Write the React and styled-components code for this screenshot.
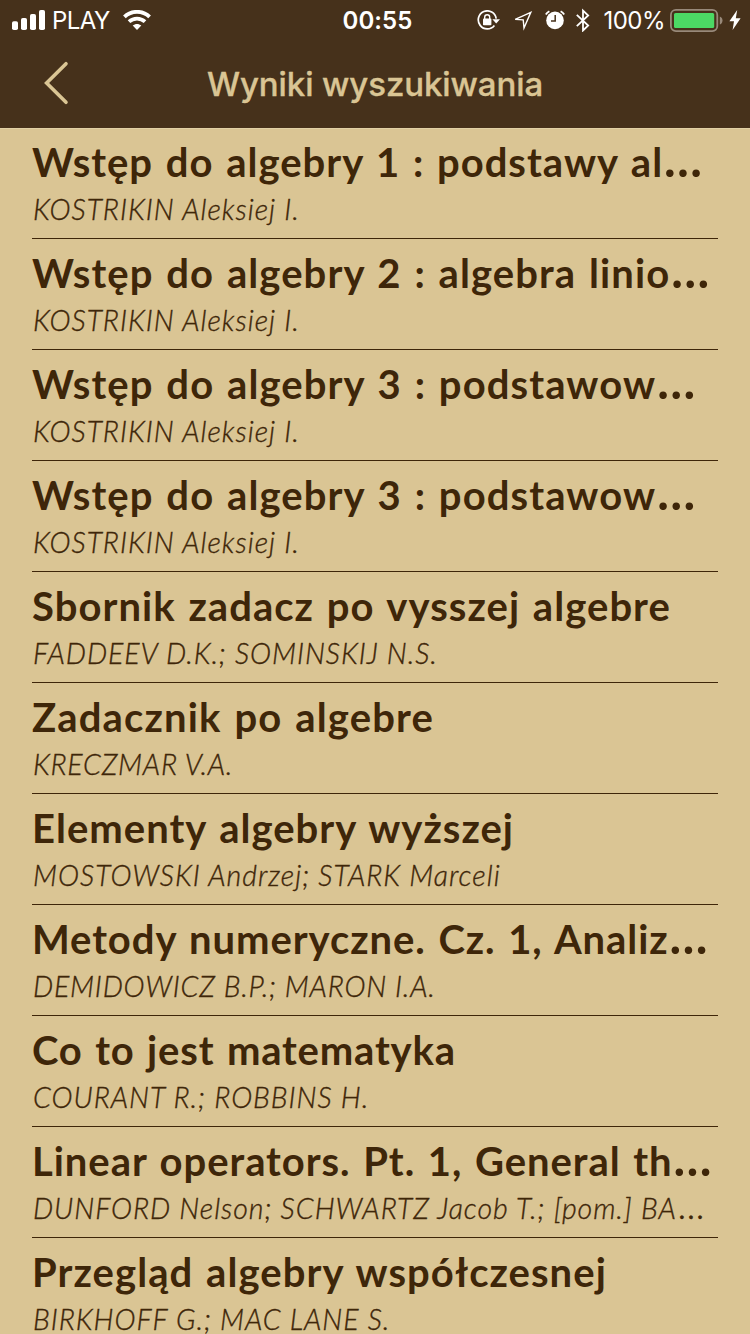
import React from 'react';
import styled, { createGlobalStyle } from 'styled-components';

const sand = '#dac594';
const bark = '#46311b';
const ink = '#3e2609';

const GlobalStyle = createGlobalStyle`
  * { box-sizing: border-box; }
  body { margin: 0; background: ${sand}; }
`;

const Screen = styled.div`
  width: 750px;
  height: 1334px;
  overflow: hidden;
  background: ${sand};
`;

const Header = styled.header`
  height: 128px;
  background: ${bark};
  box-shadow: 0 1px 0 #e2d1a6;
`;

const StatusBar = styled.div`
  display: grid;
  grid-template-columns: 1fr auto 1fr;
  align-items: center;
  height: 40px;
  padding: 0 9px 0 12px;
  color: #fff;
  font: 400 24px/38px Inter, "Liberation Sans", sans-serif;
`;

const StatusGroup = styled.div`
  display: flex;
  align-items: center;
  justify-content: ${(p) => (p.$end ? 'flex-end' : 'flex-start')};
  height: 40px;

  svg { display: block; flex: none; }
`;

const StatusText = styled.span`
  padding-top: 2px;
`;

const Carrier = styled(StatusText)`
  margin: 0 13px 0 7px;
  letter-spacing: -0.6px;
`;

const Clock = styled(StatusText)`
  padding-left: 2px;
  font-weight: 600;
  letter-spacing: 0.1px;
`;

const Percent = styled(StatusText)`
  margin: 0 5px 0 13px;
  letter-spacing: -0.5px;
`;

const Icon = styled.svg`
  margin-left: ${(p) => p.$gap || 0}px;
`;

const NavBar = styled.nav`
  display: grid;
  grid-template-columns: 100px 1fr 100px;
  align-items: center;
  height: 88px;
  color: ${sand};
`;

const BackButton = styled.button`
  display: flex;
  padding: 0 0 2px 42px;
  border: 0;
  background: none;
  color: inherit;
`;

const NavTitle = styled.h1`
  margin: 0;
  text-align: center;
  font: 500 33px/40px Inter, "Liberation Sans", sans-serif;
  letter-spacing: -0.1px;
  -webkit-text-stroke: 0.35px ${sand};
`;

const Results = styled.ul`
  margin: 0;
  padding: 0 32px;
  list-style: none;
`;

const Result = styled.li`
  height: 111px;
  padding-top: 10px;
  border-bottom: 1px solid ${ink};
  color: ${ink};
  white-space: nowrap;
`;

const Title = styled.h2`
  margin: 0;
  font: 700 40px/48px Lato, "Noto Sans", sans-serif;
  letter-spacing: ${(p) => p.$tracking}px;
  word-spacing: 2px;
`;

const Author = styled.p`
  margin: 5px 0 0 1px;
  font: italic 300 28.5px/36px Lato, "Noto Sans", sans-serif;
  letter-spacing: ${(p) => p.$tracking}px;
  -webkit-text-stroke: 0.35px ${ink};
`;

const Ellipsis = styled.span`
  margin-left: ${(p) => p.$gap}px;
  font-size: ${(p) => p.$scale}em;
  line-height: 0;
`;

const books = [
  { title: 'Wstęp do algebry 1 : podstawy al', cut: true, tt: 1, author: 'KOSTRIKIN Aleksiej I.', at: 1 },
  { title: 'Wstęp do algebry 2 : algebra linio', cut: true, tt: 1.08, author: 'KOSTRIKIN Aleksiej I.', at: 1 },
  { title: 'Wstęp do algebry 3 : podstawow', cut: true, tt: 1.09, author: 'KOSTRIKIN Aleksiej I.', at: 1 },
  { title: 'Wstęp do algebry 3 : podstawow', cut: true, tt: 1.09, author: 'KOSTRIKIN Aleksiej I.', at: 1 },
  { title: 'Sbornik zadacz po vysszej algebre', tt: 1.04, author: 'FADDEEV D.K.; SOMINSKIJ N.S.', at: 0.93 },
  { title: 'Zadacznik po algebre', tt: 1.15, author: 'KRECZMAR V.A.', at: 0.74 },
  { title: 'Elementy algebry wyższej', tt: 1.01, author: 'MOSTOWSKI Andrzej; STARK Marceli', at: 0.99 },
  { title: 'Metody numeryczne. Cz. 1, Analiz', cut: true, tt: 0.93, author: 'DEMIDOWICZ B.P.; MARON I.A.', at: 0.78 },
  { title: 'Co to jest matematyka', tt: 0.82, author: 'COURANT R.; ROBBINS H.', at: 0.957 },
  { title: 'Linear operators. Pt. 1, General th', cut: true, tt: 0.95, author: 'DUNFORD Nelson; SCHWARTZ Jacob T.; [pom.] BA', authorCut: true, at: 0.96 },
  { title: 'Przegląd algebry współczesnej', tt: 1.06, author: 'BIRKHOFF G.; MAC LANE S.', at: 0.95 },
];

const Signal = () => (
  <Icon width="33" height="20" viewBox="0 0 33 20" fill="#fff">
    <rect x="0" y="11.3" width="6" height="8.7" rx="1.8" />
    <rect x="9" y="8" width="6" height="12" rx="1.8" />
    <rect x="18" y="4" width="6" height="16" rx="1.8" />
    <rect x="27" y="0" width="6" height="20" rx="1.8" />
  </Icon>
);

const Wifi = () => (
  <Icon width="28" height="20" viewBox="0 0 28 20" fill="none" stroke="#fff">
    <path d="M1.4 6.9C8.4 0.1 19.6 0.1 26.6 6.9" strokeWidth="3.8" />
    <path d="M6 11.7C10.6 7.5 17.4 7.5 22 11.7" strokeWidth="3.8" />
    <path d="M9.7 15.6C12.2 13.3 15.8 13.3 18.3 15.6L14 20Z" fill="#fff" stroke="none" />
  </Icon>
);

const RotationLock = () => (
  <Icon width="23" height="20" viewBox="0 0 23 20" fill="none" stroke="#fff">
    <path d="M19.2 8.6A9 9 0 1 0 17.4 15.4" strokeWidth="1.7" />
    <path d="M15.4 9.2H23L19.2 13.6Z" fill="#fff" stroke="none" />
    <rect x="6" y="8.6" width="8.4" height="6.6" rx="0.8" fill="#fff" stroke="none" />
    <path d="M7.7 9V7.2A2.5 2.5 0 0 1 12.7 7.2V9" strokeWidth="1.4" />
  </Icon>
);

const Location = () => (
  <Icon $gap={12} width="21" height="22" viewBox="0 0 21 22" fill="none" stroke="#fff" strokeWidth="1.4" strokeLinejoin="miter">
    <path d="M18.8 3.4L3.2 10.4L11.2 10.8L12 19Z" />
  </Icon>
);

const Alarm = () => (
  <Icon $gap={12} width="20" height="20" viewBox="0 0 20 20">
    <circle cx="10" cy="10.4" r="8.8" fill="#fff" />
    <path d="M0.8 4.6A10 10 0 0 1 4.4 1.3M15.6 1.3A10 10 0 0 1 19.2 4.6" fill="none" stroke="#fff" strokeWidth="1.8" />
    <path d="M10.2 5V11H6" fill="none" stroke={bark} strokeWidth="1.5" />
  </Icon>
);

const Bluetooth = () => (
  <Icon $gap={11} width="14" height="24" viewBox="0 0 14 24" fill="none" stroke="#fff" strokeWidth="1.8">
    <path d="M0.8 6.8L12.2 17.5L7 22.5V2.5L12.2 7.5L0.8 18.2" />
  </Icon>
);

const Battery = () => (
  <Icon width="53" height="24" viewBox="0 0 53 24">
    <rect x="0.9" y="1.9" width="46.4" height="21.2" rx="5" fill="none" stroke="#98897a" strokeWidth="1.8" />
    <rect x="4" y="5" width="40.2" height="15" rx="1.6" fill="#4cd964" />
    <path d="M49.8 8.4C53.4 9.6 53.4 15.4 49.8 16.6Z" fill="#98897a" />
  </Icon>
);

const Bolt = () => (
  <Icon $gap={6} width="12" height="20" viewBox="0 0 12 20" fill="#fff">
    <path d="M8.2 0L0.4 11.3H5L3.6 20L11.6 8.2H6.8Z" />
  </Icon>
);

export default function App() {
  return (
    <Screen>
      <GlobalStyle />
      <Header>
        <StatusBar>
          <StatusGroup>
            <Signal />
            <Carrier>PLAY</Carrier>
            <Wifi />
          </StatusGroup>
          <Clock>00:55</Clock>
          <StatusGroup $end>
            <RotationLock />
            <Location />
            <Alarm />
            <Bluetooth />
            <Percent>100%</Percent>
            <Battery />
            <Bolt />
          </StatusGroup>
        </StatusBar>
        <NavBar>
          <BackButton aria-label="Wstecz">
            <svg width="28" height="44" viewBox="0 0 28 44" fill="none" stroke="currentColor" strokeWidth="3.6" strokeLinecap="round">
              <path d="M24 2.7L4.6 22L24 41.3" />
            </svg>
          </BackButton>
          <NavTitle>Wyniki wyszukiwania</NavTitle>
        </NavBar>
      </Header>
      <Results>
        {books.map((b, i) => (
          <Result key={i}>
            <Title $tracking={b.tt}>
              {b.title}
              {b.cut && <Ellipsis $gap={1} $scale={1.23}>…</Ellipsis>}
            </Title>
            <Author $tracking={b.at}>
              {b.author}
              {b.authorCut && <Ellipsis $gap={2} $scale={1.3}>…</Ellipsis>}
            </Author>
          </Result>
        ))}
      </Results>
    </Screen>
  );
}
